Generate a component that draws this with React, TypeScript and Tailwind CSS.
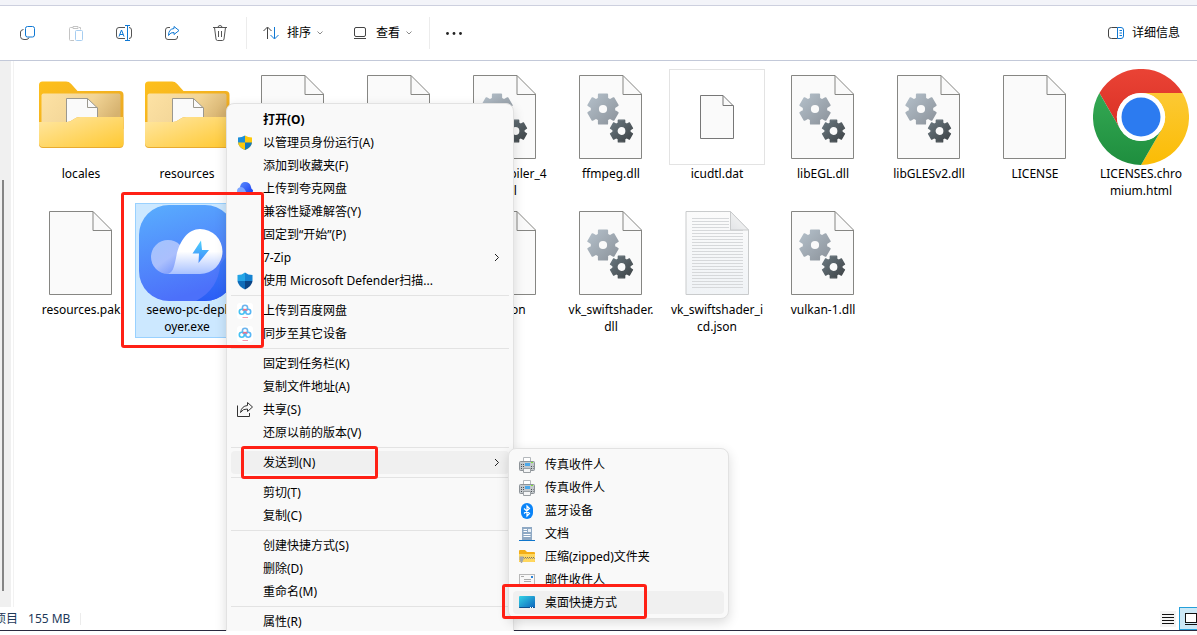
import type { ReactNode } from "react";
import clsx from "clsx";

type FileKind = "folder" | "page" | "dll" | "data" | "text" | "chrome" | "seewo";

interface FileItem {
	kind: FileKind;
	lines: string[];
	selected?: boolean;
}

const FILES: FileItem[] = [
	{ kind: "folder", lines: ["locales"] },
	{ kind: "folder", lines: ["resources"] },
	{ kind: "page", lines: [] },
	{ kind: "page", lines: [] },
	{ kind: "dll", lines: ["d3dcompiler_4", "7.dll"] },
	{ kind: "dll", lines: ["ffmpeg.dll"] },
	{ kind: "data", lines: ["icudtl.dat"] },
	{ kind: "dll", lines: ["libEGL.dll"] },
	{ kind: "dll", lines: ["libGLESv2.dll"] },
	{ kind: "page", lines: ["LICENSE"] },
	{ kind: "chrome", lines: ["LICENSES.chro", "mium.html"] },
	{ kind: "page", lines: ["resources.pak"] },
	{ kind: "seewo", lines: ["seewo-pc-depl", "oyer.exe"], selected: true },
	{ kind: "page", lines: [] },
	{ kind: "page", lines: [] },
	{ kind: "page", lines: ["version"] },
	{ kind: "dll", lines: ["vk_swiftshader.", "dll"] },
	{ kind: "text", lines: ["vk_swiftshader_i", "cd.json"] },
	{ kind: "dll", lines: ["vulkan-1.dll"] },
];

interface MenuEntry {
	label: string;
	icon?: ReactNode;
	bold?: boolean;
	submenu?: boolean;
	active?: boolean;
}

// Six-toothed gear outline with a round hole, centred on cx/cy
function gearPath(cx: number, cy: number, outer: number, inner: number, hole: number) {
	const points: string[] = [];
	for (let i = 0; i < 6; i++) {
		const mid = -90 + i * 60;
		const corners: [number, number][] = [
			[-22, inner],
			[-16, outer],
			[16, outer],
			[22, inner],
		];
		for (const [offset, r] of corners) {
			const a = ((mid + offset) * Math.PI) / 180;
			points.push(`${(cx + r * Math.cos(a)).toFixed(2)} ${(cy + r * Math.sin(a)).toFixed(2)}`);
		}
	}
	return `M${points.join("L")}ZM${cx - hole} ${cy}a${hole} ${hole} 0 1 0 ${hole * 2} 0a${hole} ${hole} 0 1 0 ${-hole * 2} 0Z`;
}

const BIG_GEAR = gearPath(40, 40, 15.2, 11.4, 5);
const SMALL_GEAR = gearPath(58.5, 62, 11.3, 8.5, 4.6);

function Gradients() {
	return (
		<svg width="0" height="0" className="absolute" aria-hidden="true">
			<defs>
				<linearGradient id="folderBack" x1="0" y1="0" x2="1" y2="1">
					<stop offset="0" stopColor="#fec01c" />
					<stop offset="1" stopColor="#e9a624" />
				</linearGradient>
				<linearGradient id="folderInner" x1="0" y1="0" x2="1" y2="0.4">
					<stop offset="0" stopColor="#fde2a4" />
					<stop offset="0.6" stopColor="#f2d597" />
					<stop offset="1" stopColor="#d6b26f" />
				</linearGradient>
				<linearGradient id="folderFront" x1="0" y1="0" x2="1" y2="1">
					<stop offset="0" stopColor="#ffe7a4" />
					<stop offset="1" stopColor="#ffc932" />
				</linearGradient>
				<linearGradient id="gearLight" x1="0" y1="0" x2="1" y2="1">
					<stop offset="0" stopColor="#b4c0ca" />
					<stop offset="1" stopColor="#8c939b" />
				</linearGradient>
				<linearGradient id="gearDark" x1="0" y1="0" x2="1" y2="1">
					<stop offset="0" stopColor="#6c7a82" />
					<stop offset="1" stopColor="#3c4144" />
				</linearGradient>
				<linearGradient id="notepad" x1="0" y1="0" x2="0" y2="1">
					<stop offset="0" stopColor="#fbfbfb" />
					<stop offset="1" stopColor="#f0f3f6" />
				</linearGradient>
				<linearGradient id="notepadFold" x1="0" y1="1" x2="1" y2="0">
					<stop offset="0" stopColor="#e2e4e6" />
					<stop offset="1" stopColor="#fafafa" />
				</linearGradient>
				<linearGradient id="seewoBg" x1="0" y1="0" x2="0.3" y2="1">
					<stop offset="0" stopColor="#59aefe" />
					<stop offset="1" stopColor="#4c70fa" />
				</linearGradient>
				<linearGradient id="seewoCorner" x1="0" y1="0" x2="0" y2="1">
					<stop offset="0" stopColor="#4385fb" />
					<stop offset="1" stopColor="#2a5df6" />
				</linearGradient>
				<linearGradient id="seewoCloud" x1="0" y1="0" x2="0" y2="1">
					<stop offset="0.5" stopColor="#ffffff" />
					<stop offset="1" stopColor="#a9c2ff" />
				</linearGradient>
				<linearGradient id="seewoPuff" x1="0" y1="0" x2="0.7" y2="1">
					<stop offset="0" stopColor="#a2c4fd" />
					<stop offset="0.6" stopColor="#aabffd" />
					<stop offset="1" stopColor="#7898fc" />
				</linearGradient>
				<linearGradient id="seewoBolt" x1="0" y1="0" x2="0" y2="1">
					<stop offset="0" stopColor="#4fd2fd" />
					<stop offset="1" stopColor="#3f86fb" />
				</linearGradient>
				<linearGradient id="chromeRed" x1="0" y1="0" x2="0" y2="1">
					<stop offset="0" stopColor="#ea4335" />
					<stop offset="1" stopColor="#d93025" />
				</linearGradient>
				<linearGradient id="chromeYellow" x1="0" y1="0" x2="0" y2="1">
					<stop offset="0" stopColor="#fcc934" />
					<stop offset="1" stopColor="#fbbc04" />
				</linearGradient>
				<linearGradient id="chromeGreen" x1="0" y1="0" x2="0" y2="1">
					<stop offset="0" stopColor="#34a853" />
					<stop offset="1" stopColor="#1e8e3e" />
				</linearGradient>
				<linearGradient id="screen" x1="0" y1="0" x2="1" y2="1">
					<stop offset="0" stopColor="#34d3e6" />
					<stop offset="1" stopColor="#0c62bb" />
				</linearGradient>
				<linearGradient id="quark" x1="0" y1="0" x2="1" y2="1">
					<stop offset="0" stopColor="#5a8cff" />
					<stop offset="1" stopColor="#1436ee" />
				</linearGradient>
			</defs>
		</svg>
	);
}

function PageOutline() {
	return (
		<g fill="#fafafa" stroke="#868683">
			<path d="M16.5 6.5H60L78.5 25V89.5H16.5Z" />
			<path d="M60 6.5V25.5H78.5" fill="none" />
		</g>
	);
}

function FileIcon({ kind }: { kind: FileKind }) {
	return (
		<svg width="96" height="96" viewBox="0 0 96 96" className="shrink-0" aria-hidden="true">
			{kind === "folder" && (
				<>
					<path d="M6 16q0-3.500 3.500-3.500H33q3 0 5 2.300L44.500 22H86.500q4 0 4 4V60H6Z" fill="url(#folderBack)" />
					<rect x="8.500" y="24.500" width="79" height="40" rx="2" fill="url(#folderInner)" />
					<path d="M33.500 29.500H54.500L64.500 39V60H33.500Z" fill="#fafafa" stroke="#9b988f" />
					<path d="M54.500 29.500V38.500H64.500" fill="none" stroke="#9b988f" />
					<path d="M6 53H34q3 0 5.500-2l1.500-1q2.500-2 6-2H90.500V75q0 4-4 4H10q-4 0-4-4Z" fill="#e8ab30" />
					<path d="M6 53H34q3 0 5.500-2l1.500-1q2.500-2 6-2H90.500V74q0 4-4 4H10q-4 0-4-4Z" fill="url(#folderFront)" />
				</>
			)}
			{kind === "page" && <PageOutline />}
			{kind === "dll" && (
				<>
					<PageOutline />
					<path
						d={BIG_GEAR}
						fill="url(#gearLight)"
						fillRule="evenodd"
						stroke="url(#gearLight)"
						strokeWidth="1.800"
						strokeLinejoin="round"
					/>
					<path
						d={SMALL_GEAR}
						fill="url(#gearDark)"
						fillRule="evenodd"
						stroke="url(#gearDark)"
						strokeWidth="1.400"
						strokeLinejoin="round"
					/>
				</>
			)}
			{kind === "data" && (
				<>
					<rect x="0.500" y="0.500" width="95" height="95" fill="#fff" stroke="#e3e3e3" />
					<path d="M31.500 26.500H54L64.500 37V69.500H31.500Z" fill="#fafafa" stroke="#777" />
					<path d="M54 26.500V36.500H64.500" fill="none" stroke="#777" />
				</>
			)}
			{kind === "text" && (
				<>
					<path d="M17 6.500H61.500L79.500 25V89.500H17Z" fill="url(#notepad)" stroke="#c9cbcc" />
					{Array.from({ length: 24 }, (_, i) => (
						<path key={i} d={`M23 ${13.5 + i * 3}H${i < 4 ? 60 : 74}`} stroke="#d6d8da" />
					))}
					<path d="M61.500 6.500V25H79.500Z" fill="url(#notepadFold)" stroke="#c9cbcc" />
				</>
			)}
			{kind === "chrome" && (
				<>
					<path d="M6.400 24A48 48 0 0 1 89.600 24H48A24 24 0 0 0 27.200 60Z" fill="url(#chromeRed)" />
					<path d="M89.600 24A48 48 0 0 1 48 96L68.800 60A24 24 0 0 0 48 24Z" fill="url(#chromeYellow)" />
					<path d="M48 96A48 48 0 0 1 6.400 24L27.200 60A24 24 0 0 0 68.800 60Z" fill="url(#chromeGreen)" />
					<circle cx="48" cy="48" r="24" fill="#fff" />
					<circle cx="48" cy="48" r="19.500" fill="#2c7bf0" />
				</>
			)}
			{kind === "seewo" && (
				<>
					<rect width="96" height="96" rx="30" fill="url(#seewoBg)" />
					<path d="M57 96C72 88 80 76 81 60L96 40V66A30 30 0 0 1 66 96Z" fill="url(#seewoCorner)" />
					<circle cx="29" cy="52" r="17" fill="url(#seewoPuff)" />
					<path d="M27 69C34 69 35 62 37 53C40 36 49 24 61 24A22.500 22.500 0 0 1 61 69Z" fill="url(#seewoCloud)" />
					<path d="M62 35.500L53.500 48.500H60L59.500 58L70 45H63Z" fill="url(#seewoBolt)" />
				</>
			)}
		</svg>
	);
}

function FileTile({ file }: { file: FileItem }) {
	return (
		<li
			className={clsx(
				"flex flex-col items-center border pt-px pr-0.5 pb-0.5",
				file.selected ? "border-[#99d1ff] bg-[#cce8ff]" : "border-transparent",
			)}
		>
			<FileIcon kind={file.kind} />
			<span className="text-center text-xs/[17px] whitespace-nowrap">
				{file.lines.map((line) => (
					<span key={line} className="block">
						{line}
					</span>
				))}
			</span>
		</li>
	);
}

function Chevron() {
	return (
		<svg width="8" height="8" viewBox="0 0 8 8" fill="none" stroke="#8a8a8a" aria-hidden="true">
			<path d="M1.500 2.500L4 5L6.500 2.500" />
		</svg>
	);
}

const TOOL_ICONS: { label: string; drawing: ReactNode }[] = [
	{
		label: "复制",
		drawing: (
			<>
				<path d="M3.500 4.500Q0.500 5 0.500 7V11.500Q0.500 14.500 4 14.500H6Q8.500 14.500 9 12.500" stroke="#555" />
				<rect x="5.500" y="1.500" width="9" height="10.500" rx="2" stroke="#0f78d4" />
			</>
		),
	},
	{
		label: "粘贴",
		drawing: (
			<>
				<path d="M5 2.500H2.500Q1.500 2.500 1.500 3.500V14.500Q1.500 15.500 2.500 15.500H6M11 2.500H12.500V4.500M5 1.500H10V3.500H5Z" stroke="#c4c4c4" />
				<rect x="7.500" y="5.500" width="7" height="10" rx="1" stroke="#a6cdf0" />
			</>
		),
	},
	{
		label: "重命名",
		drawing: (
			<>
				<path d="M9 2.500H3Q0.500 2.500 0.500 5V11Q0.500 13.500 3 13.500H9M13 2.500Q15.500 2.500 15.500 5V11Q15.500 13.500 13 13.500" stroke="#555" />
				<path d="M3 11.500L5.500 5L8 11.500M4 9.500H7M11.500 0.500V15.500M9 0.500H14M9 15.500H14" stroke="#0f78d4" />
			</>
		),
	},
	{
		label: "共享",
		drawing: (
			<>
				<path d="M6 2.500H4Q1.500 2.500 1.500 5V12Q1.500 14.500 4 14.500H11Q13.500 14.500 13.500 12V11" stroke="#555" />
				<path d="M10 1.500L15 5.500L10 9.500V7.500Q6.500 7 4.500 10.500Q4.500 4 10 3.500Z" stroke="#0f78d4" strokeLinejoin="round" />
			</>
		),
	},
	{
		label: "删除",
		drawing: (
			<path
				d="M1 2.500H15M6 2.500Q6 0.500 8 0.500Q10 0.500 10 2.500M2.500 2.500L4 14Q4.200 15.500 5.500 15.500H10.500Q11.800 15.500 12 14L13.500 2.500M6.500 6V12M9.500 6V12"
				stroke="#555"
			/>
		),
	},
];

function Toolbar() {
	return (
		<header className="flex h-[55px] shrink-0 items-center border-b border-[#c3c9d9] pr-[17px] pl-5">
			<div className="flex gap-8">
				{TOOL_ICONS.map((tool) => (
					<button key={tool.label} aria-label={tool.label} className="size-4">
						<svg width="16" height="16" viewBox="0 0 16 16" fill="none">
							{tool.drawing}
						</svg>
					</button>
				))}
			</div>
			<div className="ml-[18px] h-8 w-px bg-[#ececec]" />
			<button className="ml-4 flex items-center">
				<svg width="16" height="16" viewBox="0 0 16 16" fill="none" aria-hidden="true">
					<path d="M4.500 14V2.500M0.500 6L4.500 2L8.500 6" stroke="#444" />
					<path d="M11.500 2V13.500M7.500 10L11.500 14L15.500 10" stroke="#0f78d4" />
				</svg>
				<span className="mr-[5px] ml-2 text-xs">排序</span>
				<Chevron />
			</button>
			<button className="ml-7 flex items-center">
				<svg width="16" height="16" viewBox="0 0 16 16" fill="none" stroke="#444" aria-hidden="true">
					<rect x="2.500" y="2.500" width="11" height="9" rx="1.500" />
					<path d="M2 13.500H14" />
				</svg>
				<span className="mr-[5px] ml-2 text-xs">查看</span>
				<Chevron />
			</button>
			<div className="ml-4 h-8 w-px bg-[#ececec]" />
			<button className="ml-4" aria-label="更多">
				<svg width="16" height="16" viewBox="0 0 16 16" fill="#222" aria-hidden="true">
					<circle cx="1.500" cy="8.500" r="1.400" />
					<circle cx="8" cy="8.500" r="1.400" />
					<circle cx="14.500" cy="8.500" r="1.400" />
				</svg>
			</button>
			<button className="ml-auto flex items-center gap-2">
				<svg width="16" height="16" viewBox="0 0 16 16" fill="none" aria-hidden="true">
					<path d="M9.500 2.500H3.500Q0.500 2.500 0.500 5V11Q0.500 13.500 3.500 13.500H9.500" stroke="#444" />
					<path d="M9.500 2.500H13Q15.500 2.500 15.500 5V11Q15.500 13.500 13 13.500H9.500ZM11.500 5.500H14M11.500 8H14M11.500 10.500H14" stroke="#0f78d4" />
				</svg>
				<span className="text-xs">详细信息</span>
			</button>
		</header>
	);
}

function UacShield() {
	return (
		<svg width="16" height="16" viewBox="0 0 16 16">
			<path d="M8 0.500Q5 2.500 1 2.500V7Q1 12 8 15Z" fill="#1c8fd8" />
			<path d="M8 0.500Q11 2.500 15 2.500V7Q15 12 8 15Z" fill="#fdc90c" />
			<path d="M1 7.500H8V15Q1.500 12 1 7.500Z" fill="#fdc90c" />
			<path d="M8 7.500H15Q14.500 12 8 15Z" fill="#1478bd" />
		</svg>
	);
}

function DefenderShield() {
	return (
		<svg width="16" height="18" viewBox="0 0 16 18">
			<path d="M8 0.500Q5 3 0.500 3V9H8Z" fill="#25a5e6" />
			<path d="M8 0.500Q11 3 15.500 3V9H8Z" fill="#1683d2" />
			<path d="M0.500 9H8V17.500Q1 14 0.500 9Z" fill="#0f6cb9" />
			<path d="M8 9H15.500Q15 14 8 17.500Z" fill="#0a4486" />
		</svg>
	);
}

function QuarkIcon() {
	return (
		<svg width="16" height="16" viewBox="0 0 16 16">
			<path d="M3 6Q4 1 8 1Q13 1 14 6Q14 8 16 9Q16 14 12 14H8Z" fill="url(#quark)" />
			<path d="M4 6Q8 6 10 14H3Q0 13 0 10Q0 6.500 4 6Z" fill="#7ea6ff" />
		</svg>
	);
}

function BaiduIcon() {
	return (
		<svg width="16" height="16" viewBox="0 0 16 16" fill="none" strokeWidth="1.600">
			<rect width="16" height="16" rx="3" fill="#fff" />
			<circle cx="8" cy="4.800" r="2.600" stroke="#6cb4ee" />
			<circle cx="4.800" cy="8.800" r="2.500" stroke="#45c2f3" />
			<circle cx="11.200" cy="8.800" r="2.500" stroke="#58b6f6" />
			<path d="M5.800 7.500Q8 5.500 10.200 7.500" stroke="#f2708a" />
			<path d="M5.500 14.500H11" stroke="#f09ab0" strokeWidth="1" />
		</svg>
	);
}

function ShareIcon() {
	return (
		<svg width="16" height="16" viewBox="0 0 16 16" fill="none" stroke="#333">
			<path d="M0.500 3.500V14.500H12.500V11" />
			<path d="M10.500 0.500L15.500 5L10.500 9.500V7Q6 6.500 3.500 10.500Q4.500 4 10.500 3.500Z" strokeLinejoin="round" />
		</svg>
	);
}

function FaxIcon() {
	return (
		<svg width="16" height="16" viewBox="0 0 16 16">
			<path d="M4.500 5V0.500H11.500V5" fill="#fff" stroke="#b4b8bc" />
			<rect x="0.500" y="4.500" width="15" height="9" rx="1" fill="#c3c8cc" stroke="#8d9398" />
			<path d="M2 7.500H5M2 9.500H5M2 11.500H5M12 9.500H14.500M12 11.500H14.500" stroke="#4c5257" strokeDasharray="1 1" />
			<rect x="6" y="6" width="5" height="3" fill="#4ca8ea" />
			<rect x="12" y="5" width="2" height="1" fill="#7fe236" />
			<path d="M4.500 11.500H11.500V15.500H4.500Z" fill="#f4f5f6" stroke="#9ba0a4" />
		</svg>
	);
}

function BluetoothIcon() {
	return (
		<svg width="16" height="16" viewBox="0 0 16 16">
			<rect x="2" width="12" height="16" rx="6" fill="#0a84f8" />
			<path d="M5 5.500L10.500 10.500L8 13V3L10.500 5.500L5 10.500" fill="none" stroke="#fff" strokeWidth="1.200" />
		</svg>
	);
}

function DocumentsIcon() {
	return (
		<svg width="16" height="16" viewBox="0 0 16 16">
			<path d="M3 1H13V14H3Z" fill="#8fa9c4" />
			<path d="M4.500 3.500H8M4.500 5.500H8M4.500 8.500H11.500M4.500 10.500H11.500" stroke="#fff" />
			<rect x="9" y="3" width="3" height="3" fill="#e8f0f7" />
			<rect y="14" width="16" height="1" fill="#0f76cc" />
		</svg>
	);
}

function ZipIcon() {
	return (
		<svg width="16" height="16" viewBox="0 0 16 16">
			<path d="M0 2Q0 1 1 1H6L8 3H15Q16 3 16 4V13H0Z" fill="#f3ae17" />
			<path d="M0 5H16V12Q16 13 15 13H1Q0 13 0 12Z" fill="#ffd75e" />
			<path d="M4 8.500H16" stroke="#77736a" strokeDasharray="1 1" />
			<path d="M5 9.500H16" stroke="#a59a7c" strokeDasharray="1 1" />
			<path d="M0.500 7.500H4.500V10.500L3 14H2L0.500 10.500Z" fill="#a3a6a8" />
		</svg>
	);
}

function MailIcon() {
	return (
		<svg width="16" height="16" viewBox="0 0 16 16">
			<rect x="0.500" y="2.500" width="15" height="11" fill="#f8f8f8" stroke="#b8b8b8" />
			<path d="M2 4.500H5M5 7.500H12M5 9.500H12" stroke="#a9a9a9" />
			<rect x="12" y="4" width="2" height="2" fill="#2a83d8" />
		</svg>
	);
}

function DesktopIcon() {
	return (
		<svg width="16" height="16" viewBox="0 0 16 16">
			<rect y="1" width="16" height="12" rx="1" fill="url(#screen)" />
			<path d="M0 12H16Q16 13 15 13H1Q0 13 0 12Z" fill="#0d4f8d" />
			<path d="M11 12.500H15" stroke="#fff" strokeDasharray="1 1" />
		</svg>
	);
}

const MENU_GROUPS: MenuEntry[][] = [
	[
		{ label: "打开(O)", bold: true },
		{ label: "以管理员身份运行(A)", icon: <UacShield /> },
		{ label: "添加到收藏夹(F)" },
		{ label: "上传到夸克网盘", icon: <QuarkIcon /> },
		{ label: "兼容性疑难解答(Y)" },
		{ label: "固定到“开始”(P)" },
		{ label: "7-Zip", submenu: true },
		{ label: "使用 Microsoft Defender扫描...", icon: <DefenderShield /> },
	],
	[
		{ label: "上传到百度网盘", icon: <BaiduIcon /> },
		{ label: "同步至其它设备", icon: <BaiduIcon /> },
	],
	[
		{ label: "固定到任务栏(K)" },
		{ label: "复制文件地址(A)" },
		{ label: "共享(S)", icon: <ShareIcon /> },
		{ label: "还原以前的版本(V)" },
	],
	[{ label: "发送到(N)", submenu: true, active: true }],
	[{ label: "剪切(T)" }, { label: "复制(C)" }],
	[{ label: "创建快捷方式(S)" }, { label: "删除(D)" }, { label: "重命名(M)" }],
	[{ label: "属性(R)" }],
];

const SEND_TO: MenuEntry[] = [
	{ label: "传真收件人", icon: <FaxIcon /> },
	{ label: "传真收件人", icon: <FaxIcon /> },
	{ label: "蓝牙设备", icon: <BluetoothIcon /> },
	{ label: "文档", icon: <DocumentsIcon /> },
	{ label: "压缩(zipped)文件夹", icon: <ZipIcon /> },
	{ label: "邮件收件人", icon: <MailIcon /> },
	{ label: "桌面快捷方式", icon: <DesktopIcon />, active: true },
];

function MenuRow({ entry }: { entry: MenuEntry }) {
	return (
		<button
			role="menuitem"
			className={clsx(
				"flex h-[23px] w-full items-center rounded-[4px] pr-2 pl-1.5 text-left text-xs whitespace-nowrap",
				entry.active && "bg-[#f0f0f0]",
				entry.bold && "font-bold",
			)}
		>
			<span className="mr-2.5 flex w-4 shrink-0 justify-center" aria-hidden="true">
				{entry.icon}
			</span>
			{entry.label}
			{entry.submenu && (
				<svg width="8" height="8" viewBox="0 0 8 8" fill="none" stroke="#222" className="ml-auto" aria-hidden="true">
					<path d="M2 0L5.500 3.500L2 7" />
				</svg>
			)}
		</button>
	);
}

function ContextMenu() {
	return (
		<div
			role="menu"
			className="absolute top-[103px] left-[226px] w-72 rounded-lg border border-[#e2e2e2] bg-[#f9f9f9] p-1 shadow-[0_4px_12px_rgba(0,0,0,0.14)]"
		>
			{MENU_GROUPS.map((group, i) => (
				<div key={i}>
					{i > 0 && <hr className="my-[3px] border-[#e3e3e3]" />}
					{group.map((entry) => (
						<MenuRow key={entry.label} entry={entry} />
					))}
				</div>
			))}
		</div>
	);
}

function SendToMenu() {
	return (
		<div
			role="menu"
			className="absolute top-[448px] left-[508px] w-[221px] rounded-lg border border-[#e2e2e2] bg-[#f9f9f9] p-1 shadow-[0_4px_12px_rgba(0,0,0,0.14)]"
		>
			{SEND_TO.map((entry, i) => (
				<MenuRow key={i} entry={entry} />
			))}
		</div>
	);
}

function StatusBar() {
	return (
		<footer className="flex h-6 shrink-0 items-center border-b border-[#2b2b40] text-xs text-[#1e3959]">
			<span className="-ml-1.5">项目</span>
			<span className="ml-2.5">155 MB</span>
			<span className="ml-2.5 h-3 w-px bg-[#ececec]" />
			<button className="ml-auto flex size-4 items-center justify-center bg-[#f4f4f4]" aria-label="列表">
				<svg width="12" height="12" viewBox="0 0 12 12" stroke="#111">
					<path d="M0 1.500H12M0 4.500H12M0 7.500H12M0 10.500H12" />
				</svg>
			</button>
			<button className="ml-[3px] h-[23px] w-[18px] border border-r-0 border-[#26a0da] bg-[#cce8f6] pl-[5px]" aria-label="大图标">
				<svg width="12" height="14" viewBox="0 0 12 14" fill="#fff" stroke="#111">
					<rect x="0.500" y="1.500" width="11" height="9" />
					<path d="M0 12.500H12" />
				</svg>
			</button>
		</footer>
	);
}

export default function App() {
	return (
		<div className="h-screen bg-white pb-1 font-['Noto_Sans','Noto_Sans_CJK_SC',sans-serif] text-black">
			<Gradients />
			<div className="relative flex h-full flex-col overflow-hidden">
				<div className="h-1.5 shrink-0 border-b border-[#cdd0df] bg-[#f3f4f9]" />
				<Toolbar />
				<main className="flex min-h-0 flex-1">
					<aside className="w-[11px] shrink-0 bg-[#f0f0f0] pt-[119px] pb-4 pl-0.5">
						<div className="h-full w-0.5 bg-[#858585]" />
					</aside>
					<ul className="ml-0.5 grid flex-1 auto-rows-[136px] grid-cols-[repeat(auto-fill,106px)] items-start overflow-hidden border-l border-[#f2f2f2] pt-1.5 pl-[15px]">
						{FILES.map((file, i) => (
							<FileTile key={i} file={file} />
						))}
					</ul>
				</main>
				<StatusBar />

				<ContextMenu />
				<SendToMenu />

				{/* Highlight boxes marking the three steps */}
				<div className="absolute top-[192px] left-[121px] h-[156px] w-[143px] rounded-[3px] border-3 border-[#ff2015]" />
				<div className="absolute top-[446px] left-[241px] h-[33px] w-[137px] rounded-[3px] border-3 border-[#ff2015]" />
				<div className="absolute top-[584px] left-[502px] h-[35px] w-[145px] rounded-[3px] border-3 border-[#ff2015]" />
			</div>
		</div>
	);
}
